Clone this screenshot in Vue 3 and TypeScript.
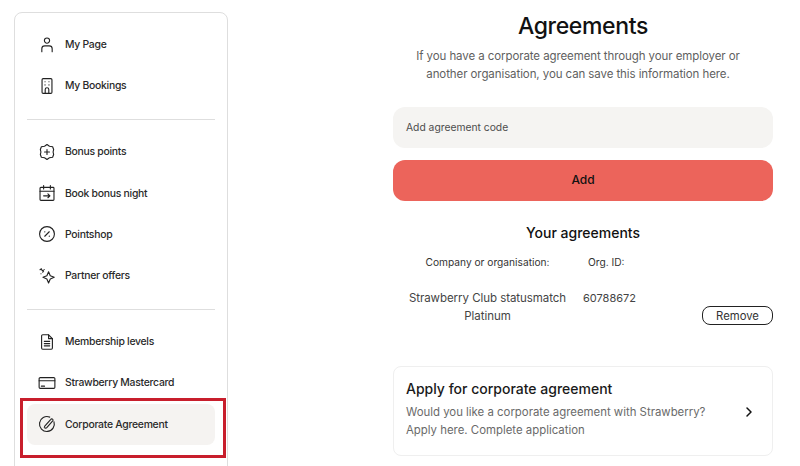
<template>
  <div class="page">
    <aside class="sidebar">
      <template v-for="(group, i) in navGroups" :key="i">
        <hr v-if="i > 0" class="divider" />
        <nav class="nav-group">
          <a v-for="item in group" :key="item.label" class="nav-item" :class="{ active: item.active }">
            <svg class="nav-icon" viewBox="0 0 16 16" fill="none" stroke="currentColor" stroke-width="1" stroke-linecap="round" stroke-linejoin="round">
              <path v-for="(d, j) in item.paths" :key="j" :d="d" />
            </svg>
            <span>{{ item.label }}</span>
          </a>
        </nav>
      </template>
      <div class="highlight"></div>
    </aside>

    <main class="content">
      <h1>Agreements</h1>
      <p class="intro">If you have a corporate agreement through your employer or another organisation, you can save this information here.</p>

      <div class="code-input">Add agreement code</div>
      <button class="add-btn" type="button">Add</button>

      <h2>Your agreements</h2>
      <div class="agreements">
        <span class="col-head">Company or organisation:</span>
        <span class="col-head org">Org. ID:</span>
        <span></span>
        <span class="company-name">Strawberry Club statusmatch Platinum</span>
        <span class="org-id">60788672</span>
        <button class="remove-btn" type="button">Remove</button>
      </div>

      <section class="apply-card">
        <div>
          <h3>Apply for corporate agreement</h3>
          <p>Would you like a corporate agreement with Strawberry?<br />Apply here. Complete application</p>
        </div>
        <svg class="chevron" viewBox="0 0 10 12" fill="none" stroke="currentColor" stroke-width="1.5" stroke-linecap="round" stroke-linejoin="round">
          <path d="M3 2l4 4-4 4" />
        </svg>
      </section>
    </main>
  </div>
</template>

<script setup lang="ts">
interface NavItem {
  label: string
  paths: string[]
  active?: boolean
}

const navGroups: NavItem[][] = [
  [
    {
      label: 'My Page',
      paths: ['M8 1.8a2.3 2.3 0 1 0 0 4.6A2.3 2.3 0 0 0 8 1.8z', 'M3.4 14v-2.6a2.6 2.6 0 0 1 2.6-2.6h4a2.6 2.6 0 0 1 2.6 2.6V14'],
    },
    {
      label: 'My Bookings',
      paths: [
        'M4.6 1.4h6.8a1 1 0 0 1 1 1v11.2a1 1 0 0 1-1 1H4.6a1 1 0 0 1-1-1V2.4a1 1 0 0 1 1-1z',
        'M6.4 14.6v-3.4a1.6 1.6 0 0 1 3.2 0v3.4',
        'M6.2 4.2h.1M9.7 4.2h.1M6.2 7h.1M9.7 7h.1',
      ],
    },
  ],
  [
    {
      label: 'Bonus points',
      paths: [
        'M8 1.4l2.2 1.5 2.8.4.9 2.5-.5 2.2.5 2.2-.9 2.5-2.8.4L8 14.6l-2.2-1.5-2.8-.4-.9-2.5.5-2.2-.5-2.2.9-2.5 2.8-.4z',
        'M8 5.8v4.4M5.8 8h4.4',
      ],
    },
    {
      label: 'Book bonus night',
      paths: [
        'M2.6 3h10.8a.8.8 0 0 1 .8.8v10a.8.8 0 0 1-.8.8H2.6a.8.8 0 0 1-.8-.8v-10a.8.8 0 0 1 .8-.8z',
        'M1.8 6.4h12.4M5 1.4v3M11 1.4v3',
        'M5 10.5h5.6M8.8 8.8l1.8 1.7-1.8 1.7',
      ],
    },
    {
      label: 'Pointshop',
      paths: [
        'M8 1.4a6.6 6.6 0 1 0 0 13.2A6.6 6.6 0 0 0 8 1.4z',
        'M10 6l-4 4',
        'M6 6.1h.1M10 9.9h.1',
      ],
    },
    {
      label: 'Partner offers',
      paths: [
        'M9.4 4.2l1.5 3.5 3.5 1.5-3.5 1.5-1.5 3.5-1.5-3.5-3.5-1.5 3.5-1.5z',
        'M1.8 2.4l1.2-.8.6 1.4 1.4.4-.8 1.2',
        'M5.4 2.2h.1M2.6 6h.1',
      ],
    },
  ],
  [
    {
      label: 'Membership levels',
      paths: [
        'M3.2 2.6a1 1 0 0 1 1-1h5.2l3.4 3.4v8.4a1 1 0 0 1-1 1H4.2a1 1 0 0 1-1-1z',
        'M9.4 1.6V5h3.4',
        'M5.6 7.4h4.8M5.6 9.4h4.8M5.6 11.4h4.8',
      ],
    },
    {
      label: 'Strawberry Mastercard',
      paths: [
        'M2 3.2h12a1 1 0 0 1 1 1v7.6a1 1 0 0 1-1 1H2a1 1 0 0 1-1-1V4.2a1 1 0 0 1 1-1z',
        'M1 6h14',
        'M3 10.8h2.8',
      ],
    },
    {
      label: 'Corporate Agreement',
      active: true,
      paths: [
        'M10.4 1.9A6.6 6.6 0 1 0 14.2 6',
        'M5.8 10.2l5.6-6.4a1.1 1.1 0 0 1 1.7 1.4L8 11a1.8 1.8 0 0 1-2.4.2',
      ],
    },
  ],
]
</script>

<style>
html,
body {
  margin: 0;
  background: #fff;
}
</style>

<style scoped>
.page {
  display: flex;
  align-items: flex-start;
  width: 800px;
  height: 466px;
  overflow: hidden;
  font-family: Inter, "Open Sans", sans-serif;
  color: #1d1d1d;
}

.sidebar {
  position: relative;
  flex: none;
  box-sizing: border-box;
  width: 214px;
  margin: 12px 0 0 14px;
  padding: 11px 12px 40px;
  border: 1px solid #dedede;
  border-radius: 8px;
}

.nav-item {
  display: flex;
  align-items: center;
  gap: 9px;
  height: 41.33px;
  padding-left: 11px;
  border-radius: 8px;
  font-size: 10.4px;
  font-weight: 500;
  letter-spacing: -0.27px;
  color: #2a2a2a;
}

.nav-item.active {
  background: #f5f3f1;
}

.nav-icon {
  flex: none;
  width: 18px;
  height: 18px;
  color: #222;
}

.divider {
  margin: 12.5px 0 11px;
  border: none;
  border-top: 1px solid #dedede;
}

.highlight {
  position: absolute;
  left: 5px;
  top: 385px;
  width: 206px;
  height: 60px;
  box-sizing: border-box;
  border: 3px solid #c81e2c;
}

.content {
  flex: none;
  width: 380px;
  margin-left: 165px;
  text-align: center;
}

h1 {
  margin: 12px 0 0;
  font-size: 23px;
  line-height: 29px;
  font-weight: 500;
  letter-spacing: -0.35px;
  color: #111;
}

.intro {
  margin: 6px 0 0;
  padding: 0 30px 0 20px;
  font-size: 11.5px;
  line-height: 18px;
  letter-spacing: -0.09px;
  color: #5f5f5f;
}

.code-input {
  margin-top: 24px;
  box-sizing: border-box;
  height: 41px;
  padding-left: 13px;
  border-radius: 12px;
  background: #f5f4f2;
  font-size: 10.3px;
  line-height: 41px;
  text-align: left;
  color: #4d4d4d;
}

.add-btn {
  display: block;
  width: 100%;
  height: 41px;
  margin-top: 12px;
  padding: 0 0 2px;
  border: none;
  border-radius: 12px;
  background: #ec645b;
  font-family: inherit;
  font-size: 12px;
  font-weight: 500;
  color: #111;
}

h2 {
  margin: 23px 0 0;
  font-size: 14px;
  line-height: 18px;
  font-weight: 500;
  color: #111;
}

.agreements {
  display: grid;
  grid-template-columns: 189px 54px 1fr;
  align-items: start;
  margin-top: 13px;
}

.col-head {
  font-size: 10.2px;
  line-height: 14px;
  color: #333;
  white-space: nowrap;
}

.org {
  padding-left: 6px;
  text-align: left;
}

.company-name,
.org-id {
  margin-top: 20px;
  font-size: 11.5px;
  line-height: 18px;
  color: #444;
}

.company-name {
  padding: 0 10px;
  letter-spacing: -0.05px;
}

.org-id {
  padding-left: 1px;
  font-size: 11px;
  text-align: left;
}

.remove-btn {
  justify-self: end;
  align-self: end;
  width: 71px;
  height: 19px;
  padding: 0;
  border: 1.2px solid #222;
  border-radius: 8px;
  background: #fff;
  font-family: inherit;
  font-size: 11.3px;
  color: #333;
}

.apply-card {
  display: flex;
  align-items: center;
  justify-content: space-between;
  box-sizing: border-box;
  height: 90px;
  margin-top: 41px;
  padding: 0 18px 4px 12px;
  border: 1px solid #efefef;
  border-radius: 8px;
  text-align: left;
}

h3 {
  margin: 0;
  font-size: 14px;
  line-height: 18px;
  font-weight: 500;
  color: #1a1a1a;
}

.apply-card p {
  margin: 5px 0 0;
  font-size: 11.4px;
  line-height: 18px;
  color: #6a6a6a;
}

.chevron {
  flex: none;
  width: 10px;
  height: 12px;
  margin-top: 6px;
  color: #111;
}
</style>
